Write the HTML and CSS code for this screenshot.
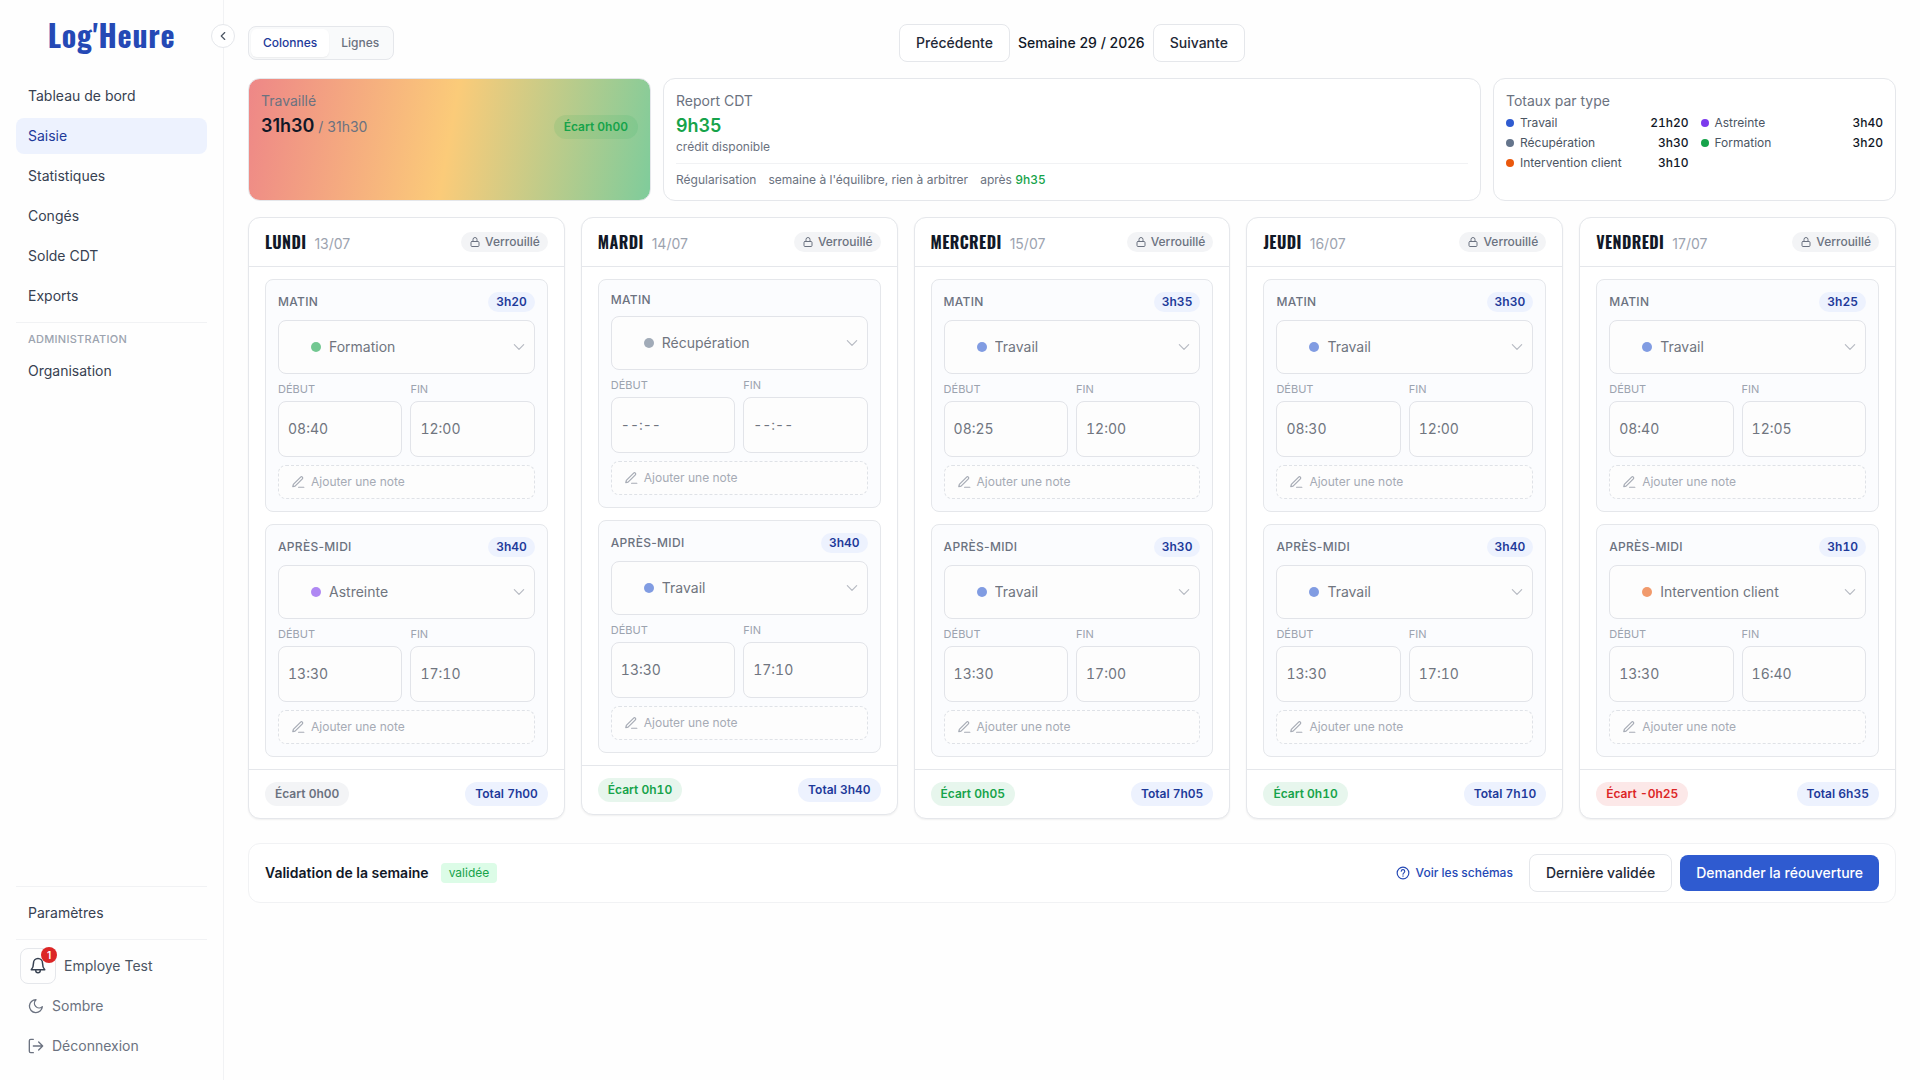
FILE: index.html
```html
<!DOCTYPE html>
<html lang="fr">

<head>
    <meta charset="UTF-8">
    <meta name="viewport" content="width=device-width, initial-scale=1.0">
    <title>Log'Heure - Saisie</title>
    <link rel="stylesheet" href="styles.css">
    <script src="script.js" defer></script>
</head>

<body>
    <!-- icônes partagées -->
    <svg class="sprite" aria-hidden="true">
        <symbol id="i-left" viewBox="0 0 24 24"><path d="M15 18l-6-6 6-6"/></symbol>
        <symbol id="i-down" viewBox="0 0 24 24"><path d="M4 8l8 8 8-8"/></symbol>
        <symbol id="i-lock" viewBox="0 0 24 24"><rect x="4" y="11" width="16" height="10" rx="2"/><path d="M8 11V7a4 4 0 0 1 8 0v4"/></symbol>
        <symbol id="i-pen" viewBox="0 0 24 24"><path d="M13 21h9"/><path d="M16.500 3.500a2.100 2.100 0 0 1 3 3L7 19l-4 1 1-4z"/></symbol>
        <symbol id="i-bell" viewBox="0 0 24 24"><path d="M6 8a6 6 0 0 1 12 0c0 5 1 7 3 9H3c2-2 3-4 3-9z"/><path d="M9 18a3 3 0 0 0 6 0"/></symbol>
        <symbol id="i-moon" viewBox="0 0 24 24"><path d="M12 2.500A7 7 0 0 0 21.500 13 9.700 9.700 0 1 1 12 2.500z"/></symbol>
        <symbol id="i-out" viewBox="0 0 24 24"><path d="M8 2H4a2 2 0 0 0-2 2v16a2 2 0 0 0 2 2h4"/><path d="M8 12h14M16 6l6 6-6 6"/></symbol>
        <symbol id="i-help" viewBox="0 0 24 24"><circle cx="12" cy="12" r="10"/><path d="M9 9a3 3 0 0 1 6 .5c0 2-3 2.500-3 4.500M12 17v.5"/></symbol>
    </svg>

    <div class="app">
        <aside class="sidebar">
            <button class="collapse" aria-label="Réduire le menu"><svg class="icon"><use href="#i-left"/></svg></button>
            <div class="logo">Log'Heure</div>
            <nav class="nav">
                <a href="#">Tableau de bord</a>
                <a href="#" class="active">Saisie</a>
                <a href="#">Statistiques</a>
                <a href="#">Congés</a>
                <a href="#">Solde CDT</a>
                <a href="#">Exports</a>
            </nav>
            <div class="nav-admin">
                <div class="nav-title">Administration</div>
                <nav class="nav"><a href="#">Organisation</a></nav>
            </div>
            <div class="sidebar-bottom">
                <nav class="nav"><a href="#">Paramètres</a></nav>
            </div>
            <div class="account">
                <div class="user">
                    <button class="bell" aria-label="Notifications"><svg class="icon"><use href="#i-bell"/></svg><span class="count">1</span></button>
                    <span>Employe Test</span>
                </div>
                <button class="link-btn"><svg class="icon"><use href="#i-moon"/></svg>Sombre</button>
                <button class="link-btn"><svg class="icon"><use href="#i-out"/></svg>Déconnexion</button>
            </div>
        </aside>

        <main class="main">
            <div class="toolbar">
                <div class="toggle">
                    <button class="on">Colonnes</button>
                    <button>Lignes</button>
                </div>
                <div class="week">
                    <button class="btn">Précédente</button>
                    <span>Semaine 29 / 2026</span>
                    <button class="btn">Suivante</button>
                </div>
            </div>

            <div class="summary">
                <section class="card worked">
                    <div class="card-title">Travaillé</div>
                    <div class="worked-row">
                        <div><strong class="big">31h30</strong> <span>/ 31h30</span></div>
                        <span class="pill green">Écart 0h00</span>
                    </div>
                </section>
                <section class="card report">
                    <div class="card-title">Report CDT</div>
                    <div class="big credit">9h35</div>
                    <div class="small">crédit disponible</div>
                    <div class="regul small">
                        <span>Régularisation</span>
                        <span>semaine à l'équilibre, rien à arbitrer</span>
                        <span>après <b>9h35</b></span>
                    </div>
                </section>
                <section class="card totals">
                    <div class="card-title">Totaux par type</div>
                    <ul>
                        <li><i class="dot travail"></i>Travail<b>21h20</b></li>
                        <li><i class="dot astreinte"></i>Astreinte<b>3h40</b></li>
                        <li><i class="dot recup"></i>Récupération<b>3h30</b></li>
                        <li><i class="dot formation"></i>Formation<b>3h20</b></li>
                        <li><i class="dot client"></i>Intervention client<b>3h10</b></li>
                    </ul>
                </section>
            </div>

            <div class="days" id="days"></div>

            <section class="validation">
                <h2>Validation de la semaine</h2>
                <span class="tag">validée</span>
                <div class="actions">
                    <button class="help"><svg class="icon"><use href="#i-help"/></svg>Voir les schémas</button>
                    <button class="btn">Dernière validée</button>
                    <button class="btn primary">Demander la réouverture</button>
                </div>
            </section>
        </main>
    </div>
</body>

</html>
```

FILE: styles.css
```css
* {
    margin: 0;
    padding: 0;
    box-sizing: border-box;
}

body {
    font-family: Inter, "Liberation Sans", sans-serif;
    font-size: 14px;
    line-height: 20px;
    color: #111827;
    background: #fefefe;
}

button,
input,
select {
    font: inherit;
    color: inherit;
    background: none;
    border: none;
}

a {
    color: inherit;
    text-decoration: none;
}

.sprite {
    display: none;
}

.icon {
    width: 14px;
    height: 14px;
    flex: none;
    fill: none;
    stroke: currentColor;
    stroke-width: 2;
    stroke-linecap: round;
    stroke-linejoin: round;
}

.app {
    display: flex;
    min-height: 100vh;
}

/* menu */
.sidebar {
    position: relative;
    width: 224px;
    flex: none;
    display: flex;
    flex-direction: column;
    padding: 16px;
    border-right: 1px solid #f1f2f4;
    color: #374151;
}

.collapse {
    position: absolute;
    top: 24px;
    right: -12px;
    width: 24px;
    height: 24px;
    display: flex;
    align-items: center;
    justify-content: center;
    border: 1px solid #e5e7eb;
    border-radius: 50%;
    background: #fff;
    color: #4b5563;
}

.logo {
    padding-bottom: 24px;
    text-align: center;
    font-family: Oswald, "Liberation Sans Narrow", "DejaVu Sans Condensed", sans-serif;
    font-size: 30px;
    line-height: 38px;
    font-weight: 700;
    letter-spacing: .025em;
    color: #2549b5;
}

.nav {
    display: flex;
    flex-direction: column;
    gap: 4px;
}

.nav a {
    padding: 8px 12px;
    border-radius: 8px;
}

.nav a.active {
    background: #edf2fe;
    color: #1e3a9a;
}

.nav-admin {
    margin-top: 8px;
    padding-top: 8px;
    border-top: 1px solid #f1f2f4;
}

.nav-title {
    padding: 0 12px 6px;
    font-size: 11px;
    line-height: 16px;
    font-weight: 500;
    letter-spacing: .025em;
    text-transform: uppercase;
    color: #9ca3af;
}

.sidebar-bottom {
    margin-top: auto;
    padding: 8px 0;
    border-top: 1px solid #f1f2f4;
}

.account {
    display: flex;
    flex-direction: column;
    gap: 4px;
    padding-top: 8px;
    border-top: 1px solid #f1f2f4;
}

.user {
    display: flex;
    align-items: center;
    gap: 8px;
    padding-left: 4px;
    color: #4b5563;
}

.bell {
    position: relative;
    width: 36px;
    height: 36px;
    display: flex;
    align-items: center;
    justify-content: center;
    border: 1px solid #e5e7eb;
    border-radius: 8px;
    color: #374151;
}

.bell .icon {
    width: 18px;
    height: 18px;
}

.count {
    position: absolute;
    top: -2px;
    right: -2px;
    width: 16px;
    height: 16px;
    border-radius: 8px;
    background: #dc2626;
    color: #fff;
    font-size: 10px;
    line-height: 16px;
    font-weight: 600;
    text-align: center;
}

.link-btn {
    display: flex;
    align-items: center;
    gap: 8px;
    padding: 8px 12px;
    color: #6b7280;
}

.link-btn .icon {
    width: 16px;
    height: 16px;
}

/* contenu */
.main {
    flex: 1;
    min-width: 0;
    padding: 24px;
}

.toolbar {
    display: grid;
    grid-template-columns: 1fr auto 1fr;
    align-items: center;
    margin-bottom: 16px;
}

.toggle {
    justify-self: start;
    display: flex;
    padding: 2px;
    border: 1px solid #e5e7eb;
    border-radius: 8px;
    background: #f9fafb;
}

.toggle button {
    padding: 6px 12px;
    border-radius: 6px;
    font-size: 12px;
    line-height: 16px;
    font-weight: 500;
    color: #6b7280;
}

.toggle .on {
    background: #fff;
    color: #1e3a9a;
    box-shadow: 0 1px 2px rgba(0, 0, 0, .06);
}

.week {
    display: flex;
    align-items: center;
    gap: 8px;
    font-weight: 500;
}

.btn {
    padding: 8px 16px;
    border: 1px solid #e5e7eb;
    border-radius: 8px;
    background: #fff;
    font-weight: 500;
    color: #1f2937;
}

.btn.primary {
    border: none;
    background: #2f5bd0;
    color: #fff;
}

.summary {
    display: grid;
    grid-template-columns: repeat(4, 1fr);
    gap: 12px;
    margin-bottom: 16px;
}

.card {
    padding: 12px;
    border: 1px solid #e5e7eb;
    border-radius: 12px;
    background: #fff;
}

.card-title {
    margin-bottom: 2px;
    color: #6b7280;
}

.big {
    font-size: 18px;
    line-height: 26px;
    font-weight: 600;
}

.small {
    font-size: 12px;
    line-height: 16px;
    color: #6b7280;
}

.worked {
    background: linear-gradient(100deg, #ee8787 0%, #fbcb79 50%, #7fcc9b 100%);
}

.worked-row {
    display: flex;
    align-items: flex-end;
    justify-content: space-between;
    color: #6b7280;
}

.worked-row strong {
    color: #111827;
}

.report {
    grid-column: span 2;
}

.credit,
.regul b {
    color: #16a34a;
}

.regul {
    display: flex;
    gap: 12px;
    margin-top: 8px;
    padding-top: 8px;
    border-top: 1px solid #f1f2f4;
}

.regul b {
    font-weight: 500;
    font-variant-numeric: tabular-nums;
}

.totals ul {
    display: grid;
    grid-template-columns: 1fr 1fr;
    gap: 4px 12px;
    margin-top: 4px;
    list-style: none;
    font-size: 12px;
    line-height: 16px;
    color: #4b5563;
}

.totals li {
    display: flex;
    align-items: center;
    gap: 6px;
}

.totals b {
    margin-left: auto;
    font-weight: 500;
    font-variant-numeric: tabular-nums;
    color: #111827;
}

.dot {
    width: 8px;
    height: 8px;
    flex: none;
    border-radius: 50%;
}

.travail { background: #2f5bd0; }
.astreinte { background: #7c3aed; }
.recup { background: #64748b; }
.formation { background: #16a34a; }
.client { background: #ea580c; }

.pill {
    padding: 4px 10px;
    border-radius: 12px;
    font-size: 12px;
    line-height: 16px;
    font-weight: 600;
    font-variant-numeric: tabular-nums;
    background: #f3f4f6;
    color: #6b7280;
}

.pill.green {
    background: rgba(22, 163, 74, .1);
    color: #16a34a;
}

.pill.red {
    background: #fce8e8;
    color: #dc2626;
}

.pill.blue {
    background: #edf2fe;
    color: #1e3a9a;
}

/* colonnes des jours */
.days {
    display: grid;
    grid-template-columns: repeat(5, 1fr);
    align-items: start;
    gap: 16px;
    margin-bottom: 24px;
}

.day {
    border: 1px solid #e5e7eb;
    border-radius: 12px;
    background: #fff;
    box-shadow: 0 1px 2px rgba(0, 0, 0, .06);
}

.day-head,
.day-foot {
    display: flex;
    align-items: center;
    justify-content: space-between;
    padding: 12px 16px;
}

.day-head {
    border-bottom: 1px solid #e5e7eb;
}

.day-foot {
    border-top: 1px solid #e5e7eb;
}

.day-name {
    display: flex;
    align-items: baseline;
    gap: 8px;
    color: #9ca3af;
}

.day-name h3 {
    font-family: Oswald, "Liberation Sans Narrow", "DejaVu Sans Condensed", sans-serif;
    font-size: 16px;
    line-height: 24px;
    font-weight: 700;
    letter-spacing: .025em;
    text-transform: uppercase;
    color: #111827;
}

.locked {
    display: flex;
    align-items: center;
    gap: 4px;
    padding: 2px 8px;
    font-weight: 500;
}

.locked .icon {
    width: 12px;
    height: 12px;
}

.day-body {
    display: flex;
    flex-direction: column;
    gap: 12px;
    padding: 12px 16px;
}

.slot {
    display: flex;
    flex-direction: column;
    gap: 8px;
    padding: 12px;
    border: 1px solid #e5e7eb;
    border-radius: 8px;
    background: #fbfcfe;
}

.slot-head {
    display: flex;
    align-items: center;
    justify-content: space-between;
    font-size: 12px;
    line-height: 16px;
    font-weight: 500;
    letter-spacing: .025em;
    text-transform: uppercase;
    color: #6b7280;
}

.slot-head .pill {
    padding: 2px 8px;
    letter-spacing: normal;
    text-transform: none;
}

.type {
    position: relative;
}

.type select,
.time input {
    width: 100%;
    border: 1px solid #e2e4e9;
    border-radius: 8px;
    background: #fdfdfd;
    color: #70757f;
    opacity: 1;
}

.type select {
    display: block;
    height: 54px;
    padding: 0 40px 0 50px;
    appearance: none;
}

.type .dot {
    position: absolute;
    left: 33px;
    top: 22px;
    width: 10px;
    height: 10px;
    opacity: .6;
}

.type .icon {
    position: absolute;
    right: 9px;
    top: 20px;
    color: #b6bac2;
}

.times {
    display: grid;
    grid-template-columns: 1fr 1fr;
    gap: 8px;
}

.time {
    display: flex;
    flex-direction: column;
    gap: 4px;
    font-size: 11px;
    line-height: 15px;
    text-transform: uppercase;
    color: #9ca3af;
}

.time input {
    height: 56px;
    padding: 0 9px 2px;
    font-size: 14px;
    font-variant-numeric: tabular-nums;
}

.time input::placeholder {
    color: inherit;
    opacity: 1;
}

.note {
    display: flex;
    align-items: center;
    gap: 6px;
    padding: 8px 12px;
    border: 1px dashed #dfe2e7;
    border-radius: 8px;
    background: #fdfdfd;
    font-size: 12px;
    line-height: 16px;
    color: #a6abb5;
}

/* validation */
.validation {
    display: flex;
    align-items: center;
    gap: 12px;
    padding: 10px 16px;
    border: 1px solid #f1f2f4;
    border-radius: 12px;
    background: #fff;
}

.validation h2 {
    font-size: 14px;
    font-weight: 600;
}

.tag {
    padding: 2px 8px;
    border-radius: 4px;
    background: #dcfce7;
    font-size: 12px;
    line-height: 16px;
    color: #16a34a;
}

.actions {
    display: flex;
    align-items: center;
    gap: 8px;
    margin-left: auto;
}

.help {
    display: flex;
    align-items: center;
    gap: 6px;
    padding: 8px;
    font-size: 12px;
    line-height: 16px;
    font-weight: 500;
    color: #2549b5;
}
```

FILE: script.js
```js
// [type, classe, début, fin, durée]
const T = "Travail";
const week = [
    { name: "Lundi", date: "13/07", ecart: "0h00", color: "", total: "7h00",
      slots: [["Formation", "formation", "08:40", "12:00", "3h20"], ["Astreinte", "astreinte", "13:30", "17:10", "3h40"]] },
    { name: "Mardi", date: "14/07", ecart: "0h10", color: "green", total: "3h40",
      slots: [["Récupération", "recup", "", "", ""], [T, "travail", "13:30", "17:10", "3h40"]] },
    { name: "Mercredi", date: "15/07", ecart: "0h05", color: "green", total: "7h05",
      slots: [[T, "travail", "08:25", "12:00", "3h35"], [T, "travail", "13:30", "17:00", "3h30"]] },
    { name: "Jeudi", date: "16/07", ecart: "0h10", color: "green", total: "7h10",
      slots: [[T, "travail", "08:30", "12:00", "3h30"], [T, "travail", "13:30", "17:10", "3h40"]] },
    { name: "Vendredi", date: "17/07", ecart: "-0h25", color: "red", total: "6h35",
      slots: [[T, "travail", "08:40", "12:05", "3h25"], ["Intervention client", "client", "13:30", "16:40", "3h10"]] }
];

function icon(name) {
    return `<svg class="icon"><use href="#i-${name}"/></svg>`;
}

function slotHtml(slot, title) {
    const [type, cls, start, end, duration] = slot;
    return `
        <div class="slot">
            <div class="slot-head"><span>${title}</span>${duration ? `<span class="pill blue">${duration}</span>` : ""}</div>
            <div class="type">
                <select aria-label="Type" disabled><option>${type}</option></select>
                <i class="dot ${cls}"></i>${icon("down")}
            </div>
            <div class="times">
                <label class="time">Début<input type="text" placeholder="--:--" value="${start}" disabled></label>
                <label class="time">Fin<input type="text" placeholder="--:--" value="${end}" disabled></label>
            </div>
            <button class="note">${icon("pen")}Ajouter une note</button>
        </div>`;
}

document.getElementById("days").innerHTML = week.map(day => `
    <section class="day">
        <div class="day-head">
            <div class="day-name"><h3>${day.name}</h3><span>${day.date}</span></div>
            <span class="pill locked">${icon("lock")}Verrouillé</span>
        </div>
        <div class="day-body">
            ${slotHtml(day.slots[0], "Matin")}
            ${slotHtml(day.slots[1], "Après-midi")}
        </div>
        <div class="day-foot">
            <span class="pill ${day.color}">Écart ${day.ecart}</span>
            <span class="pill blue">Total ${day.total}</span>
        </div>
    </section>`).join("");
```
